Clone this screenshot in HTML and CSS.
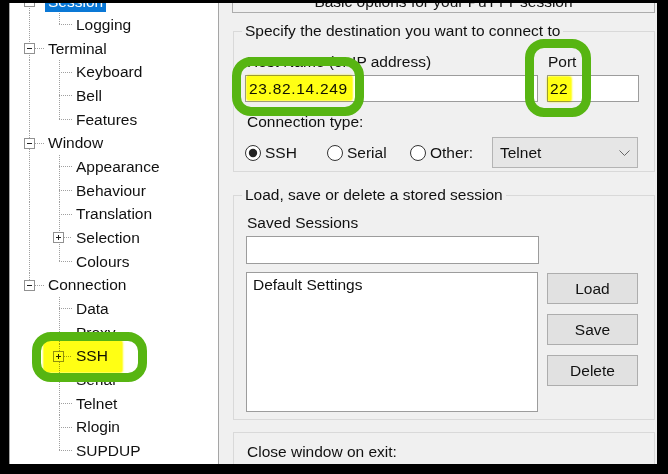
FILE: index.html
```html
<!DOCTYPE html>
<html>
<head>
<meta charset="utf-8">
<link rel="stylesheet" href="styles.css">
</head>
<body>
<div class="window">
  <div class="tree">
    <div class="row"><span class="c1 t-mid"><svg class="box" width="11" height="11" viewBox="0 0 11 11"><rect x="0.5" y="0.5" width="10" height="10" fill="#fff" stroke="#919191"/><path d="M3 5.5h5" stroke="#222"/></svg></span><span class="lbl sel">Session</span></div>
    <div class="row"><span class="c1 root"></span><span class="c2 k-last"></span><span class="lbl">Logging</span></div>
    <div class="row"><span class="c1 t-mid"><svg class="box" width="11" height="11" viewBox="0 0 11 11"><rect x="0.5" y="0.5" width="10" height="10" fill="#fff" stroke="#919191"/><path d="M3 5.5h5" stroke="#222"/></svg></span><span class="lbl">Terminal</span></div>
    <div class="row"><span class="c1 root"></span><span class="c2 k-mid"></span><span class="lbl">Keyboard</span></div>
    <div class="row"><span class="c1 root"></span><span class="c2 k-mid"></span><span class="lbl">Bell</span></div>
    <div class="row"><span class="c1 root"></span><span class="c2 k-last"></span><span class="lbl">Features</span></div>
    <div class="row"><span class="c1 t-mid"><svg class="box" width="11" height="11" viewBox="0 0 11 11"><rect x="0.5" y="0.5" width="10" height="10" fill="#fff" stroke="#919191"/><path d="M3 5.5h5" stroke="#222"/></svg></span><span class="lbl">Window</span></div>
    <div class="row"><span class="c1 root"></span><span class="c2 k-mid"></span><span class="lbl">Appearance</span></div>
    <div class="row"><span class="c1 root"></span><span class="c2 k-mid"></span><span class="lbl">Behaviour</span></div>
    <div class="row"><span class="c1 root"></span><span class="c2 k-mid"></span><span class="lbl">Translation</span></div>
    <div class="row"><span class="c1 root"></span><span class="c2 k-exp"><svg class="box" width="11" height="11" viewBox="0 0 11 11"><rect x="0.5" y="0.5" width="10" height="10" fill="#fff" stroke="#919191"/><path d="M3 5.5h5M5.5 3v5" stroke="#222"/></svg></span><span class="lbl">Selection</span></div>
    <div class="row"><span class="c1 root"></span><span class="c2 k-last"></span><span class="lbl">Colours</span></div>
    <div class="row"><span class="c1 t-last"><svg class="box" width="11" height="11" viewBox="0 0 11 11"><rect x="0.5" y="0.5" width="10" height="10" fill="#fff" stroke="#919191"/><path d="M3 5.5h5" stroke="#222"/></svg></span><span class="lbl">Connection</span></div>
    <div class="row"><span class="c1"></span><span class="c2 k-mid"></span><span class="lbl">Data</span></div>
    <div class="row"><span class="c1"></span><span class="c2 k-mid"></span><span class="lbl">Proxy</span></div>
    <div class="row"><span class="c1"></span><span class="c2 k-exp"><svg class="box" width="11" height="11" viewBox="0 0 11 11"><rect x="0.5" y="0.5" width="10" height="10" fill="#fff" stroke="#919191"/><path d="M3 5.5h5M5.5 3v5" stroke="#222"/></svg></span><span class="lbl">SSH</span></div>
    <div class="row"><span class="c1"></span><span class="c2 k-mid"></span><span class="lbl">Serial</span></div>
    <div class="row"><span class="c1"></span><span class="c2 k-mid"></span><span class="lbl">Telnet</span></div>
    <div class="row"><span class="c1"></span><span class="c2 k-mid"></span><span class="lbl">Rlogin</span></div>
    <div class="row"><span class="c1"></span><span class="c2 k-last"></span><span class="lbl">SUPDUP</span></div>
  </div>

  <div class="panel">
    <div class="banner">Basic options for your PuTTY session</div>

    <div class="group g-dest">
      <div class="legend">Specify the destination you want to connect to</div>
      <div class="gbody">
        <div class="labels"><span class="hostcol">Host Name (or IP address)</span><span class="portcol">Port</span></div>
        <div class="inputs"><div class="input host">23.82.14.249</div><div class="input port">22</div></div>
        <div class="text ctype">Connection type:</div>
        <div class="radios">
          <span class="radio r1"><svg width="16" height="16" viewBox="0 0 16 16"><circle cx="8" cy="8" r="7.5" fill="#fff" stroke="#333"/><circle cx="8" cy="8" r="4.2" fill="#222"/></svg>SSH</span>
          <span class="radio r2"><svg width="16" height="16" viewBox="0 0 16 16"><circle cx="8" cy="8" r="7.5" fill="#fff" stroke="#333"/></svg>Serial</span>
          <span class="radio r3"><svg width="16" height="16" viewBox="0 0 16 16"><circle cx="8" cy="8" r="7.5" fill="#fff" stroke="#333"/></svg>Other:</span>
          <div class="select"><span>Telnet</span><svg width="11" height="6" viewBox="0 0 11 6"><path d="M0.5 0.5l5 5 5-5" fill="none" stroke="#666"/></svg></div>
        </div>
      </div>
    </div>

    <div class="group g-store">
      <div class="legend">Load, save or delete a stored session</div>
      <div class="gbody">
        <div class="text saved">Saved Sessions</div>
        <div class="input sessname"></div>
        <div class="listrow">
          <div class="listbox"><div class="item">Default Settings</div></div>
          <div class="buttons">
            <div class="btn">Load</div>
            <div class="btn">Save</div>
            <div class="btn">Delete</div>
          </div>
        </div>
      </div>
    </div>

    <div class="group g-close">
      <div class="gbody">
        <div class="text">Close window on exit:</div>
        <div class="radios exitrow">
          <span class="radio e1"><svg width="16" height="16" viewBox="0 0 16 16"><circle cx="8" cy="8" r="7.5" fill="#fff" stroke="#333"/></svg>Always</span>
          <span class="radio e2"><svg width="16" height="16" viewBox="0 0 16 16"><circle cx="8" cy="8" r="7.5" fill="#fff" stroke="#333"/></svg>Never</span>
          <span class="radio e3"><svg width="16" height="16" viewBox="0 0 16 16"><circle cx="8" cy="8" r="7.5" fill="#fff" stroke="#333"/><circle cx="8" cy="8" r="4.2" fill="#222"/></svg>Only on clean exit</span>
        </div>
      </div>
    </div>
  </div>
</div>

<div class="mark mark-host"></div>
<div class="mark mark-port"></div>
<div class="mark mark-ssh"></div>
<div class="ring ring-host"></div>
<div class="ring ring-port"></div>
<div class="ring ring-ssh"></div>
</body>
</html>
```

FILE: styles.css
```css
:root {
  --vdot: repeating-linear-gradient(to bottom, #a0a0a0 0 1px, transparent 1px 2px);
  --hdot: repeating-linear-gradient(to right, #a0a0a0 0 1px, transparent 1px 2px);
}

html, body {
  margin: 0;
  padding: 0;
  width: 668px;
  height: 474px;
  overflow: hidden;
  background: #000;
}

body {
  font-family: "Liberation Sans", Arial, sans-serif;
  font-size: 15.5px;
  color: #111;
}

.window {
  display: flex;
  margin: 3px 0 0 9px;
  width: 648px;
  height: 461px;
  overflow: hidden;
  background: #f0f0f0;
}

/* ---------- tree ---------- */
.tree {
  flex: none;
  width: 210px;
  box-sizing: border-box;
  background: #fff;
  border-left: 1px solid #a5a5a5;
  border-right: 1px solid #a5a5a5;
  overflow: hidden;
}

.row {
  display: flex;
  align-items: center;
  height: 23.67px;
  line-height: 23.67px;
  white-space: nowrap;
}
.row:first-child {
  margin-top: -13.5px;
}

.c1, .c2 {
  flex: none;
  height: 100%;
  display: flex;
  align-items: center;
  box-sizing: border-box;
}
.c1 { width: 35px; padding-left: 14px; }
.c2 { width: 28px; padding-left: 8px; }

.t-mid {
  background: var(--hdot) 25px 50% / 10px 1px no-repeat,
              var(--vdot) 19px 0 / 1px 100% no-repeat;
}
.t-last {
  background: var(--hdot) 25px 50% / 10px 1px no-repeat,
              var(--vdot) 19px 0 / 1px 50% no-repeat;
}
.root {
  background: var(--vdot) 19px 0 / 1px 100% no-repeat;
}
.k-mid {
  background: var(--hdot) 14px 50% / 13px 1px no-repeat,
              var(--vdot) 14px 0 / 1px 100% no-repeat;
}
.k-last {
  background: var(--hdot) 14px 50% / 13px 1px no-repeat,
              var(--vdot) 14px 0 / 1px 50% no-repeat;
}
.k-exp {
  background: var(--hdot) 19px 50% / 8px 1px no-repeat,
              var(--vdot) 14px 0 / 1px 100% no-repeat;
}

.box { display: block; flex: none; }

.lbl {
  padding: 0 3px;
  color: #111;
}
.lbl.sel {
  background: #0a78d6;
  color: #fff;
  line-height: 21px;
}

/* ---------- right panel ---------- */
.panel {
  flex: 1;
  padding: 0 2px 0 13px;
  line-height: 18px;
}

.banner {
  margin-top: -13px;
  border: 1px solid #adadad;
  padding: 2px 0 1px;
  text-align: center;
}

.group {
  margin-left: 1px;
  border: 1px solid #d9d9d9;
}
.legend {
  display: table;
  margin: -10px 0 0 8px;
  padding: 0 3px;
  background: #f0f0f0;
}

.gbody {
  padding-left: 11px;
}

.g-dest { margin-top: 18px; }
.g-dest .gbody { padding-top: 13px; padding-bottom: 3px; }

.labels { display: flex; }
.hostcol { width: 300px; padding-left: 2px; }
.portcol { padding-left: 1px; }

.inputs {
  display: flex;
  gap: 9px;
  margin-top: 4px;
}
.input {
  box-sizing: border-box;
  height: 27px;
  line-height: 25px;
  background: #fff;
  border: 1px solid #9c9c9c;
  padding-left: 3px;
}
.input.host { width: 293px; letter-spacing: 0.7px; }
.input.port { width: 92px; padding-left: 2px; letter-spacing: 0.5px; }

.text { padding-left: 2px; }
.ctype { margin-top: 11px; }

.radios {
  display: flex;
  align-items: center;
  margin-top: 6px;
  height: 31px;
}
.radio {
  display: flex;
  align-items: center;
  gap: 4px;
  flex: none;
}
.radio svg { display: block; flex: none; }
.r1 { width: 82px; }
.r2 { width: 83px; }
.r3 { width: 82px; }

.select {
  box-sizing: border-box;
  width: 146px;
  height: 31px;
  background: #e6e6e6;
  border: 1px solid #b4b4b4;
  display: flex;
  align-items: center;
  justify-content: space-between;
  padding: 0 7px 0 7px;
}
.select svg { display: block; }

.g-store { margin-top: 23px; }
.g-store .gbody { padding-top: 10px; padding-bottom: 7px; }
.saved { margin-top: 0; }
.input.sessname {
  width: 293px;
  height: 28px;
  margin-top: 4px;
  margin-left: 1px;
}

.listrow {
  display: flex;
  gap: 9px;
  margin-top: 8px;
  margin-left: 1px;
}
.listbox {
  box-sizing: border-box;
  width: 292px;
  height: 140px;
  background: #fff;
  border: 1px solid #9c9c9c;
  padding: 3px 6px;
}
.buttons {
  display: flex;
  flex-direction: column;
  gap: 10px;
  padding-top: 1px;
}
.btn {
  box-sizing: border-box;
  width: 91px;
  height: 31px;
  line-height: 29px;
  text-align: center;
  background: #e1e1e1;
  border: 1px solid #adadad;
}

.g-close { margin-top: 12px; }
.g-close .gbody { padding-top: 10px; padding-bottom: 10px; }
.exitrow { margin-top: 2px; height: 18px; }
.e1 { width: 102px; }
.e2 { width: 100px; }

/* ---------- overlays: marker highlights ---------- */
.mark {
  position: absolute;
  background: #ffff14;
  mix-blend-mode: multiply;
  box-shadow: 0 0 2px 1px #ffff14;
  border-radius: 2px;
}
.mark-host { left: 247px; top: 76px; width: 105px; height: 24px; }
.mark-port { left: 548px; top: 77px; width: 23px; height: 24px; }
.mark-ssh { left: 44px; top: 341px; width: 78px; height: 31px; }

.ring {
  position: absolute;
  box-sizing: border-box;
  border: 9px solid #57b512;
  border-radius: 19px;
}
.ring-host { left: 232px; top: 57px; width: 132px; height: 59px; }
.ring-port { left: 525px; top: 39px; width: 66px; height: 78px; }
.ring-ssh { left: 32px; top: 332px; width: 115px; height: 50px; }
```
